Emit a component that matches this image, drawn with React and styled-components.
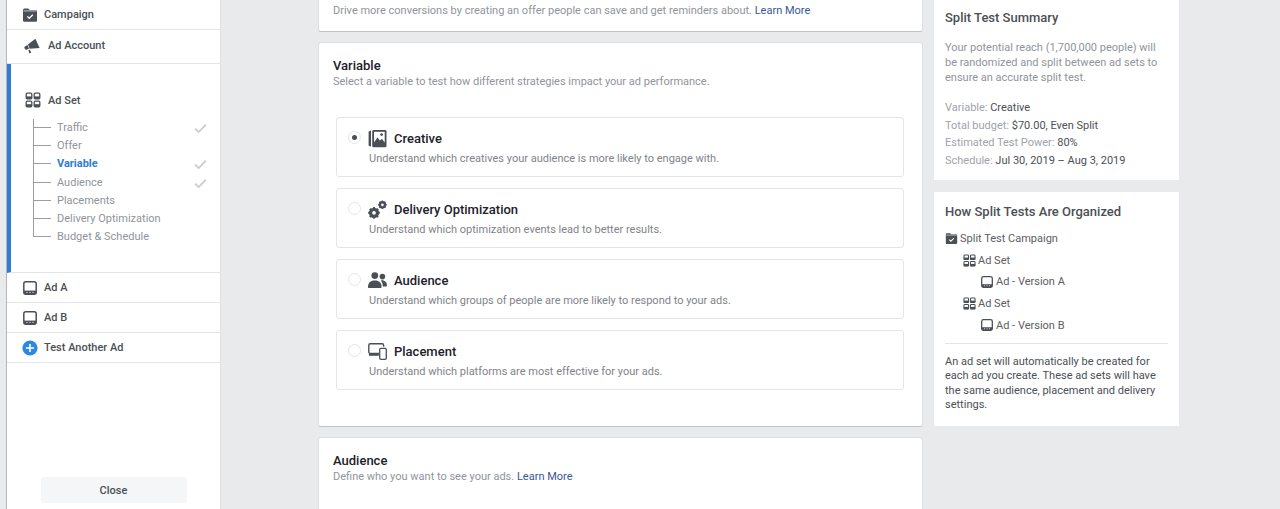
import React from "react";
import styled, { createGlobalStyle } from "styled-components";

const GlobalStyle = createGlobalStyle`
  html, body {
    margin: 0;
    padding: 0;
    height: 509px;
    overflow: hidden;
    background: #e9eaeb;
    font-family: Roboto, "Liberation Sans", sans-serif;
  }
  * { box-sizing: border-box; }
`;

const FolderIcon = ({ size = 16 }) => (
  <svg width={size} height={size} viewBox="0 0 16 16">
    <path
      d="M1 3.2C1 2 1.8 1.4 2.8 1.4h3.4l1.6 1.5h5.6c1 0 1.6.7 1.6 1.6v8.7c0 1-.7 1.6-1.6 1.6H2.6c-1 0-1.6-.7-1.6-1.6z"
      fill="#4b4f56"
    />
    <path d="M1.6 3.9h12.8" stroke="#fff" strokeWidth="0.7" fill="none" />
    <path d="M5.3 9.4l1.9 1.9 3.6-3.6" stroke="#fff" strokeWidth="1.3" fill="none" />
  </svg>
);

const MegaphoneIcon = () => (
  <svg width="16" height="16" viewBox="0 0 18 18">
    <path d="M12.8 0.8L17.6 11.2 6.4 12.2 4.4 7.4z" fill="#4b4f56" />
    <path d="M4 7.8L1 9.6c-.6.4-.8 1-.5 1.6l.6 1.3c.3.6.9.8 1.5.6l3-.9z" fill="#4b4f56" />
    <path d="M5 13.4l1.8-.3 1.2 3.6-1.9.8z" fill="#4b4f56" />
  </svg>
);

const AdSetIcon = ({ size = 16 }) => (
  <svg width={size} height={size} viewBox="0 0 16 16">
    <g fill="none" stroke="#4b4f56" strokeWidth="1.3">
      <rect x="1.2" y="1.2" width="5.6" height="5.6" rx="1" />
      <rect x="9.2" y="1.2" width="5.6" height="5.6" rx="1" />
      <rect x="1.2" y="9.2" width="5.6" height="5.6" rx="1" />
      <rect x="9.2" y="9.2" width="5.6" height="5.6" rx="1" />
    </g>
    <g fill="#4b4f56">
      <rect x="1" y="4.4" width="6" height="2.6" />
      <rect x="9" y="4.4" width="6" height="2.6" />
      <rect x="1" y="12.2" width="6" height="2.8" />
      <rect x="9" y="12.2" width="6" height="2.8" />
    </g>
  </svg>
);

const AdIcon = ({ size = 14 }) => (
  <svg width={size} height={size} viewBox="0 0 14 14">
    <rect x="0.8" y="0.8" width="12.4" height="12.4" rx="2" fill="none" stroke="#4b4f56" strokeWidth="1.5" />
    <rect x="1" y="9.6" width="12" height="3.4" fill="#4b4f56" />
    <circle cx="4" cy="11.3" r="0.6" fill="#fff" />
    <circle cx="7" cy="11.3" r="0.6" fill="#fff" />
    <circle cx="10" cy="11.3" r="0.6" fill="#fff" />
  </svg>
);

const PlusIcon = () => (
  <svg width="16" height="16" viewBox="0 0 16 16">
    <circle cx="8" cy="8" r="7.6" fill="#2d88e2" />
    <path d="M8 3.9v8.2M3.9 8h8.2" stroke="#fff" strokeWidth="1.6" />
  </svg>
);

const CheckIcon = () => (
  <svg width="13" height="11" viewBox="0 0 14 11">
    <path d="M1.2 5.6l3.9 3.7L12.8 1.3" fill="none" stroke="#c9ccd0" strokeWidth="2" />
  </svg>
);

const CreativeIcon = () => (
  <svg width="19" height="19" viewBox="0 0 19 19">
    <path d="M0.6 2.4L3 1.6V17.6L0.6 16.8z" fill="#4b4f56" />
    <rect x="4.2" y="1" width="14.3" height="17.3" rx="1.4" fill="#4b4f56" />
    <rect x="6" y="2.8" width="10.7" height="10.6" fill="#fff" />
    <path d="M6 13.6l3.4-5 2.5 2.8 2-1.7 2.8 3.9v1.6H6z" fill="#4b4f56" />
    <circle cx="13.6" cy="5.6" r="1.4" fill="#4b4f56" />
  </svg>
);

const Cog = ({ cx, cy, r }) => (
  <g>
    <circle cx={cx} cy={cy} r={r * 0.72} fill="none" stroke="#4b4f56" strokeWidth={r * 0.55} />
    {[0, 45, 90, 135].map((a) => (
      <rect
        key={a}
        x={cx - r * 0.2}
        y={cy - r * 1.12}
        width={r * 0.4}
        height={r * 2.24}
        fill="#4b4f56"
        transform={`rotate(${a} ${cx} ${cy})`}
      />
    ))}
    <circle cx={cx} cy={cy} r={r * 0.36} fill="#fff" />
  </g>
);

const GearsIcon = () => (
  <svg width="19" height="19" viewBox="0 0 19 19">
    <Cog cx={6} cy={12.8} r={5.2} />
    <Cog cx={14.4} cy={4.8} r={3.8} />
  </svg>
);

const PeopleIcon = () => (
  <svg width="19" height="16" viewBox="0 0 19 16">
    <circle cx="6.8" cy="3.6" r="3.4" fill="#4b4f56" />
    <circle cx="14.4" cy="4.6" r="2.8" fill="#4b4f56" />
    <path d="M0 15c0-4 2.2-6.5 6.8-6.5s6.8 2.5 6.8 6.5c0 .6-.4 1-1 1H1c-.6 0-1-.4-1-1z" fill="#4b4f56" />
    <path d="M12.8 8.4c3.8-.6 6.2 1.8 6.2 5.4 0 .5-.3.8-.8.8h-3.4c0-2.4-.6-4.6-2-6.2z" fill="#4b4f56" />
  </svg>
);

const DevicesIcon = () => (
  <svg width="19" height="17" viewBox="0 0 19 17">
    <path d="M11 10.4H2.2c-.8 0-1.4-.6-1.4-1.4V2.2C.8 1.4 1.4.8 2.2.8h12c.8 0 1.4.6 1.4 1.4v1.6" fill="none" stroke="#4b4f56" strokeWidth="1.4" />
    <path d="M1 10.6h9.8v2.2H1z" fill="#4b4f56" />
    <rect x="11.7" y="5.3" width="6.6" height="11" rx="1.2" fill="#fff" stroke="#4b4f56" strokeWidth="1.3" />
  </svg>
);

const adSetSteps = [
  { name: "Traffic", done: true },
  { name: "Offer" },
  { name: "Variable", active: true, done: true },
  { name: "Audience", done: true },
  { name: "Placements" },
  { name: "Delivery Optimization" },
  { name: "Budget & Schedule", last: true },
];

const variables = [
  {
    title: "Creative",
    text: "Understand which creatives your audience is more likely to engage with.",
    icon: <CreativeIcon />,
    selected: true,
  },
  {
    title: "Delivery Optimization",
    text: "Understand which optimization events lead to better results.",
    icon: <GearsIcon />,
  },
  {
    title: "Audience",
    text: "Understand which groups of people are more likely to respond to your ads.",
    icon: <PeopleIcon />,
  },
  {
    title: "Placement",
    text: "Understand which platforms are most effective for your ads.",
    icon: <DevicesIcon />,
  },
];

const App = () => (
  <Page>
    <GlobalStyle />
    <Sidebar>
      <NavRow $height={30} $lift={0}>
        <NavIcon><FolderIcon /></NavIcon>
        <NavLabel>Campaign</NavLabel>
      </NavRow>
      <NavRow $height={34} $lift={2}>
        <NavIcon $wide><MegaphoneIcon /></NavIcon>
        <NavLabel>Ad Account</NavLabel>
      </NavRow>
      <AdSetBlock>
        <AdSetHead>
          <AdSetIcon />
          <NavLabel>Ad Set</NavLabel>
        </AdSetHead>
        <StepList>
          {adSetSteps.map((s) => (
            <Step key={s.name} $last={s.last}>
              <Stub $last={s.last} />
              <StepName $active={s.active}>{s.name}</StepName>
              {s.done && <CheckIcon />}
            </Step>
          ))}
        </StepList>
      </AdSetBlock>
      <NavRow $height={30}>
        <NavIcon><AdIcon /></NavIcon>
        <NavLabel>Ad A</NavLabel>
      </NavRow>
      <NavRow $height={30}>
        <NavIcon><AdIcon /></NavIcon>
        <NavLabel>Ad B</NavLabel>
      </NavRow>
      <NavRow $height={30}>
        <NavIcon><PlusIcon /></NavIcon>
        <NavLabel>Test Another Ad</NavLabel>
      </NavRow>
      <CloseButton>Close</CloseButton>
    </Sidebar>

    <Main>
      <OfferCard>
        Drive more conversions by creating an offer people can save and get reminders about.{" "}
        <Link>Learn More</Link>
      </OfferCard>
      <VariableCard>
        <CardTitle>Variable</CardTitle>
        <CardText>Select a variable to test how different strategies impact your ad performance.</CardText>
        <OptionList>
          {variables.map((v) => (
            <Option key={v.title}>
              <Radio $selected={v.selected} />
              <OptionBody>
                <OptionHead>
                  <OptionIcon>{v.icon}</OptionIcon>
                  <OptionTitle>{v.title}</OptionTitle>
                </OptionHead>
                <OptionText>{v.text}</OptionText>
              </OptionBody>
            </Option>
          ))}
        </OptionList>
      </VariableCard>
      <AudienceCard>
        <CardTitle>Audience</CardTitle>
        <CardText>
          Define who you want to see your ads. <Link>Learn More</Link>
        </CardText>
      </AudienceCard>
    </Main>

    <Aside>
      <SummaryCard>
        <AsideTitle>Split Test Summary</AsideTitle>
        <Muted>
          Your potential reach (1,700,000 people) will be randomized and split between ad sets to ensure an accurate split test.
        </Muted>
        <Facts>
          <Fact>Variable: <b>Creative</b></Fact>
          <Fact>Total budget: <b>$70.00, Even Split</b></Fact>
          <Fact>Estimated Test Power: <b>80%</b></Fact>
          <Fact>Schedule: <b>Jul 30, 2019 – Aug 3, 2019</b></Fact>
        </Facts>
      </SummaryCard>
      <OrganizedCard>
        <AsideTitle>How Split Tests Are Organized</AsideTitle>
        <Tree>
          <TreeRow $level={0}><FolderIcon size={13} />Split Test Campaign</TreeRow>
          <TreeRow $level={1}><AdSetIcon size={13} />Ad Set</TreeRow>
          <TreeRow $level={2}><AdIcon size={12} />Ad - Version A</TreeRow>
          <TreeRow $level={1}><AdSetIcon size={13} />Ad Set</TreeRow>
          <TreeRow $level={2}><AdIcon size={12} />Ad - Version B</TreeRow>
        </Tree>
        <Note>
          An ad set will automatically be created for each ad you create. These ad sets will have the same audience, placement and delivery settings.
        </Note>
      </OrganizedCard>
    </Aside>
  </Page>
);

export default App;

const Page = styled.div`
  display: flex;
  height: 509px;
  overflow: hidden;
  background: #e9eaeb;
  padding-left: 6px;
`;

const Sidebar = styled.nav`
  position: relative;
  width: 215px;
  flex-shrink: 0;
  display: flex;
  flex-direction: column;
  background: #fff;
  border-left: 1.5px solid #b4b5b8;
  border-right: 1px solid #dddfe2;
`;

const NavRow = styled.div`
  display: flex;
  align-items: center;
  height: ${(p) => p.$height}px;
  padding-left: 15px;
  padding-bottom: ${(p) => p.$lift || 0}px;
  border-bottom: 1px solid #e3e5e8;
`;

const NavIcon = styled.span`
  display: flex;
  justify-content: center;
  width: 16px;
  margin-right: ${(p) => (p.$wide ? "8px" : "6px")};
  margin-left: ${(p) => (p.$wide ? "2px" : "0")};
`;

const NavLabel = styled.span`
  font-size: 11px;
  font-weight: 500;
  color: #4b4f56;
`;

const AdSetBlock = styled.div`
  height: 209px;
  padding: 28px 0 0 14px;
  border-left: 4px solid #2d7dd2;
  border-bottom: 1px solid #e3e5e8;
`;

const AdSetHead = styled.div`
  display: flex;
  align-items: center;
  gap: 7px;
  height: 16px;
`;

const StepList = styled.div`
  margin: 7px 0 0 8px;
  padding-top: 4px;
  width: 174px;
`;

const Step = styled.div`
  display: flex;
  align-items: flex-start;
  height: 18.2px;
  border-left: 1px solid ${(p) => (p.$last ? "transparent" : "#9a9da3")};

  svg {
    margin-top: 4px;
  }
`;

const Stub = styled.span`
  width: 17px;
  height: 9px;
  margin-right: 6px;
  flex-shrink: 0;
  border-bottom: 1px solid #9a9da3;
  ${(p) => p.$last && "border-left: 1px solid #9a9da3; margin-left: -1px; width: 18px;"}
`;

const StepName = styled.span`
  flex: 1;
  font-size: 11px;
  line-height: 18px;
  white-space: nowrap;
  font-weight: ${(p) => (p.$active ? 700 : 400)};
  color: ${(p) => (p.$active ? "#2d7dd2" : "#90949c")};
`;

const CloseButton = styled.button`
  position: absolute;
  left: 33.5px;
  top: 477px;
  width: 146px;
  height: 26px;
  border: none;
  border-radius: 3px;
  background: #f5f6f7;
  color: #4b4f56;
  font: 500 11px Roboto, sans-serif;
`;

const Main = styled.main`
  width: 605px;
  margin-left: 97px;
  flex-shrink: 0;
  display: flex;
  flex-direction: column;
  gap: 10px;
`;

const Card = styled.section`
  background: #fff;
  border: 1px solid #dddfe2;
  border-bottom-color: #bfc2c7;
  border-radius: 3px;
  padding: 0 14px;
  flex-shrink: 0;
`;

const OfferCard = styled(Card)`
  height: 32px;
  border-top: none;
  border-radius: 0 0 3px 3px;
  font-size: 11px;
  line-height: 22px;
  color: #90949c;
`;

const VariableCard = styled(Card)`
  height: 385px;
  padding-top: 15px;
`;

const AudienceCard = styled(Card)`
  height: 90px;
  padding-top: 15px;
`;

const CardTitle = styled.h2`
  margin: 0;
  font-size: 13px;
  line-height: 16px;
  font-weight: 500;
  color: #1d2129;
`;

const CardText = styled.p`
  margin: 0;
  font-size: 11px;
  line-height: 15px;
  color: #90949c;
`;

const Link = styled.a`
  color: #365899;
`;

const OptionList = styled.div`
  display: flex;
  flex-direction: column;
  gap: 11px;
  margin: 28px 4px 0 3px;
`;

const Option = styled.div`
  display: flex;
  height: 60px;
  padding: 10px 0 0 11px;
  border: 1px solid #e3e5e8;
  border-radius: 3px;
`;

const Radio = styled.span`
  position: relative;
  width: 13px;
  height: 13px;
  margin-top: 3px;
  flex-shrink: 0;
  border-radius: 50%;
  border: 1px solid #e3e5e8;
  margin-right: 7px;
  ${(p) =>
    p.$selected &&
    `&::after {
      content: "";
      position: absolute;
      left: 3px;
      top: 3px;
      width: 5px;
      height: 5px;
      border-radius: 50%;
      background: #4b4f56;
    }`}
`;

const OptionBody = styled.div`
  display: flex;
  flex-direction: column;
  gap: 4px;
`;

const OptionHead = styled.div`
  display: flex;
  align-items: center;
  height: 20px;
`;

const OptionIcon = styled.span`
  display: flex;
  justify-content: center;
  width: 19px;
  margin-right: 7px;
`;

const OptionTitle = styled.span`
  font-size: 13px;
  font-weight: 500;
  color: #1d2129;
`;

const OptionText = styled.span`
  margin-left: 1px;
  font-size: 11px;
  line-height: 14px;
  color: #7f8389;
`;

const Aside = styled.aside`
  width: 245px;
  margin-left: 11px;
  flex-shrink: 0;
  display: flex;
  flex-direction: column;
  gap: 12px;
`;

const AsideCard = styled.section`
  background: #fff;
  padding: 0 11px;
  flex-shrink: 0;
`;

const SummaryCard = styled(AsideCard)`
  height: 180px;
  padding-top: 10px;
`;

const OrganizedCard = styled(AsideCard)`
  height: 234px;
  padding-top: 12px;
`;

const AsideTitle = styled.h3`
  margin: 0;
  font-size: 13px;
  line-height: 16px;
  font-weight: 500;
  color: #4b4f56;
`;

const Muted = styled.p`
  margin: 14px 0 0;
  font-size: 11px;
  line-height: 15px;
  color: #90949c;
`;

const Facts = styled.div`
  margin-top: 14px;
`;

const Fact = styled.div`
  font-size: 11px;
  line-height: 17.7px;
  color: #a0a3a9;

  b {
    font-weight: 400;
    color: #4b4f56;
  }
`;

const Tree = styled.div`
  margin-top: 8px;
  padding-bottom: 7px;
  border-bottom: 1px solid #e3e5e8;
`;

const TreeRow = styled.div`
  display: flex;
  align-items: center;
  gap: 2px;
  height: 21.6px;
  padding-left: ${(p) => p.$level * 18}px;
  font-size: 11px;
  color: #5a5e65;

  svg {
    margin-right: ${(p) => (p.$level === 2 ? "1px" : "0")};
  }
`;

const Note = styled.p`
  margin: 11px 0 0;
  font-size: 11px;
  line-height: 14.4px;
  color: #4b4f56;
`;
